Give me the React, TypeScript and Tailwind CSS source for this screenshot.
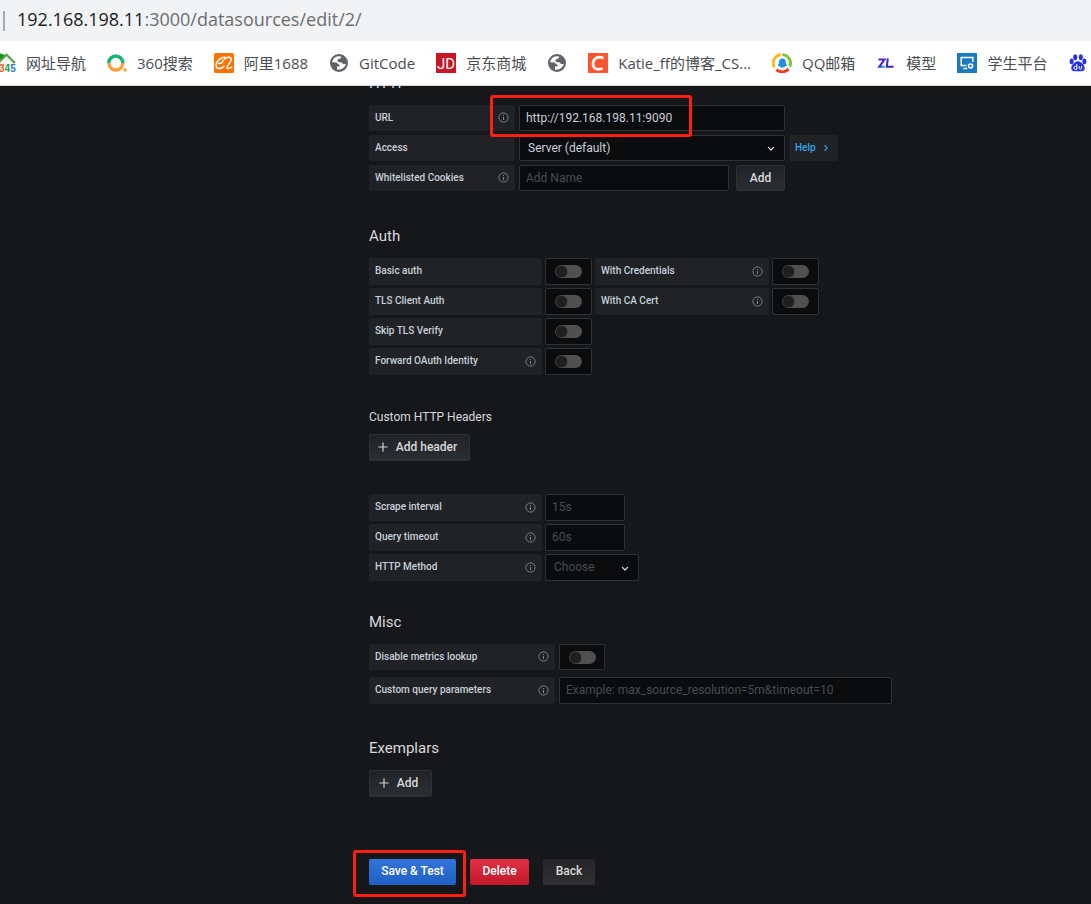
import React from 'react';

interface FieldLabelProps {
  text: string;
  htmlFor: string;
  width: string;
  info?: boolean;
}

interface ToggleProps {
  id: string;
  width?: string;
}

interface Bookmark {
  title: string;
  icon: React.ReactNode;
}

const inputClass =
  'rounded-[2px] border border-[#2c3235] bg-[#0b0c0e] px-1.5 pb-px text-xs text-[#c7d0d9] outline-none placeholder:text-[#464c54]';

const selectClass =
  'w-full appearance-none rounded-[2px] border border-[#2c3235] bg-[#0b0c0e] px-2 pb-px text-xs outline-none';

const secondaryButton =
  'flex items-center justify-center rounded-[2px] border border-[#2c3235] bg-linear-to-b from-[#202226] to-[#2a2f33] pb-px text-xs font-medium text-[#d8d9da]';

const InfoIcon: React.FC = () => (
  <svg className="h-[11px] w-[11px] shrink-0" viewBox="0 0 11 11" fill="none" stroke="#84878b">
    <circle cx="5.5" cy="5.5" r="4.6" strokeWidth="0.9" />
    <path d="M5.5 5v3M5.5 3v1" strokeWidth="1" />
  </svg>
);

const PlusIcon: React.FC = () => (
  <svg className="h-[10px] w-[10px]" viewBox="0 0 10 10" stroke="#d0d2d4" strokeWidth="1.2" strokeLinecap="round">
    <path d="M5 0.8v8.4M0.8 5h8.4" />
  </svg>
);

const ChevronDown: React.FC = () => (
  <div className="pointer-events-none absolute inset-y-0 right-2.5 flex items-center">
    <svg
      className="h-2 w-2"
      viewBox="0 0 8 8"
      fill="none"
      stroke="#d8d9da"
      strokeWidth="1.3"
      strokeLinecap="round"
      strokeLinejoin="round"
    >
      <path d="M1.4 3.4L4 6L6.6 3.4" />
    </svg>
  </div>
);

const FieldLabel: React.FC<FieldLabelProps> = ({ text, htmlFor, width, info }) => (
  <label
    htmlFor={htmlFor}
    className={`flex shrink-0 items-center justify-between rounded-[2px] bg-[#202226] px-1.5 pb-px text-[10px] font-medium text-[#c7d0d9] ${width}`}
  >
    {text}
    {info && <InfoIcon />}
  </label>
);

const Toggle: React.FC<ToggleProps> = ({ id, width = 'w-[47px]' }) => (
  <div className={`flex shrink-0 items-center justify-center rounded-[2px] border border-[#2c3235] bg-[#0b0c0e] ${width}`}>
    <input
      id={id}
      type="checkbox"
      className="flex h-[13px] w-[27px] appearance-none items-center rounded-full bg-[#505050] px-px before:h-[11px] before:w-[11px] before:rounded-full before:bg-[#1f1f20] before:shadow-[0_0_2px_#1f1f20] checked:justify-end checked:bg-[#3274d9]"
    />
  </div>
);

const SectionTitle: React.FC<{ children: React.ReactNode; spacing: string }> = ({ children, spacing }) => (
  <h3 className={`mb-3 text-[15px] leading-5 text-[#d8d9da] ${spacing}`}>{children}</h3>
);

const GlobeIcon: React.FC = () => (
  <svg className="h-5 w-5" viewBox="0 0 20 20">
    <circle cx="10" cy="10" r="9" fill="#5f6368" />
    <path d="M9.6 3.2C6.4 3.2 3.6 5.8 3.2 9.2L7.4 9.4C8.6 9.6 8.6 10.8 9.4 11.2C10.6 11.6 11 12.4 10.6 13.2L8 13.6V16.6C12 17.4 16 14.8 16.8 10.8L14.4 11.2L12.6 9.4L9.4 9L8.2 7.4L9.4 6L11.6 5.6L12.2 3.6Z" fill="#fff" />
    <path d="M3.2 9.4L8.2 12.8L7.4 14.2L5.2 14.6C4 13.2 3.2 11.6 3.2 9.4Z" fill="#5f6368" />
  </svg>
);

const bookmarks: Bookmark[] = [
  {
    title: '网址导航',
    icon: (
      <svg className="h-5 w-5" viewBox="0 0 20 20">
        <path d="M4 9L10 3L17 10V12H4Z" fill="#f3f6f1" stroke="#c3ccc0" strokeWidth="0.7" />
        <path d="M3 9L10.5 1.6L19 10" fill="none" stroke="#5a9a48" strokeWidth="2" />
        <path d="M3 0L9 2L5 6L2 7Z" fill="#159b1c" />
        <g fontFamily="Liberation Sans, sans-serif" fontSize="10" fontWeight="bold">
          <text x="3" y="19" fill="#ef5a26">3</text>
          <text x="8.6" y="19" fill="#309b36">4</text>
          <text x="14.2" y="19" fill="#2c77d8">5</text>
        </g>
      </svg>
    ),
  },
  {
    title: '360搜索',
    icon: (
      <svg className="h-5 w-5" viewBox="0 0 20 20" fill="none" strokeWidth="3.4">
        <path d="M1.8 10A7 7 0 0 1 15.8 10" stroke="#16b574" />
        <path d="M1.8 10A7 7 0 0 0 15.8 10" stroke="#fba13b" />
        <circle cx="18" cy="17" r="1.8" fill="#fba13b" stroke="none" />
      </svg>
    ),
  },
  {
    title: '阿里1688',
    icon: (
      <svg className="h-5 w-5" viewBox="0 0 20 20" fill="none" stroke="#fff" strokeWidth="1.5" strokeLinecap="round">
        <rect width="20" height="20" rx="1.5" fill="#ff7300" stroke="none" />
        <path d="M11 4.2C6.5 3.8 2.4 8.4 2 12C2 16.4 6.5 16.4 10 13.4M4.5 10.4C7.4 10.6 8.8 9 9 7.2" />
        <path d="M10.4 6C13 3.4 17.4 3.6 17.2 6.4C16.8 9.6 13.8 12 13 14C12.6 16 15 15.8 17.8 14.2" />
      </svg>
    ),
  },
  { title: 'GitCode', icon: <GlobeIcon /> },
  {
    title: '京东商城',
    icon: (
      <svg className="h-5 w-5" viewBox="0 0 20 20">
        <rect width="20" height="20" fill="#c81623" />
        <text x="10" y="15.5" textAnchor="middle" fill="#fff" fontFamily="Roboto, sans-serif" fontSize="15">JD</text>
      </svg>
    ),
  },
  { title: '', icon: <GlobeIcon /> },
  {
    title: 'Katie_ff的博客_CS...',
    icon: (
      <svg className="h-5 w-5" viewBox="0 0 20 20">
        <rect width="20" height="20" fill="#fc5531" />
        <path d="M15.5 5.2C10.5 2.8 5.6 4.8 5 10.2C4.5 15.5 9 17.4 14.6 15.4" fill="none" stroke="#fff" strokeWidth="2.6" />
      </svg>
    ),
  },
  {
    title: 'QQ邮箱',
    icon: (
      <svg className="h-5 w-5" viewBox="0 0 20 20" fill="none" strokeWidth="2.8">
        <path d="M2.4 14.4A8.6 8.6 0 0 1 9 1.6" stroke="#fdb913" />
        <path d="M10.4 1.6A8.6 8.6 0 0 1 17.8 13.6" stroke="#75c82b" />
        <path d="M4.4 16.6A8.6 8.6 0 0 0 16.6 16" stroke="#f03a17" />
        <path d="M10.4 5.6C12.8 5.6 14 7.5 13.9 10L15 13.2L13 13L12.4 14.4H8.4L7.8 13L5.8 13.2L6.9 10C6.8 7.5 8 5.6 10.4 5.6Z" fill="#1b8fd8" />
      </svg>
    ),
  },
  {
    title: '模型',
    icon: (
      <svg className="h-5 w-5" viewBox="0 0 20 20" fill="none" strokeWidth="2">
        <path d="M2.4 6.4H8.6L3.2 13.8H8.4" stroke="#5a1fd0" />
        <path d="M11.8 5.4L10.8 13.8H17.6" stroke="#3d28d8" />
        <path d="M5.6 13.8H9" stroke="#2ccbd8" />
      </svg>
    ),
  },
  {
    title: '学生平台',
    icon: (
      <svg className="h-5 w-5" viewBox="0 0 20 20" fill="none" stroke="#fff" strokeWidth="1.5">
        <rect width="20" height="20" rx="0.5" fill="#1a7abf" stroke="none" />
        <path d="M9.5 12.6H4.2V4.4H15.8V9M6.4 15.4H10.2" />
        <circle cx="13.6" cy="13" r="2" />
      </svg>
    ),
  },
  {
    title: '',
    icon: (
      <svg className="h-5 w-5" viewBox="0 0 20 20" fill="#2932e1">
        <ellipse cx="7.2" cy="4.2" rx="2" ry="3" />
        <ellipse cx="12.8" cy="4.2" rx="2" ry="3" />
        <ellipse cx="3.6" cy="8.4" rx="2" ry="2.8" />
        <ellipse cx="16.4" cy="8.4" rx="2" ry="2.8" />
        <path d="M10 8.2C13 8.2 17 12.5 16.8 15.2C16.5 18.8 13.5 18.4 10 18.2C6.5 18.4 3.5 18.8 3.2 15.2C3 12.5 7 8.2 10 8.2Z" />
        <path d="M8.8 11V16.4H7.4A1.4 1.4 0 0 1 7.4 13.4H8.8M11.2 13V15.4C11.2 16.2 13.6 16.6 13.6 15.4V13" fill="none" stroke="#fff" strokeWidth="1" />
      </svg>
    ),
  },
];

const BrowserChrome: React.FC = () => (
  <header className="font-['Open_Sans','Noto_Sans_CJK_SC',sans-serif]">
    <div className="flex h-[41px] items-center gap-3 bg-[#f1f3f4] pl-[3px]">
      <div className="h-5 w-0.5 bg-[#a9abae]"></div>
      <div className="pb-1 text-lg text-[#6b6e72]">
        <span className="text-[#202124]">192.168.198.11</span>:3000/datasources/edit/2/
      </div>
    </div>
    <nav className="h-[45px] overflow-hidden border-b border-[#d3d5d8] bg-white">
      <div className="-ml-1 flex h-11 items-center gap-[21px]">
        {bookmarks.map((b, i) => (
          <a key={i} href="#" aria-label={b.title || 'Bookmark'} className="flex shrink-0 items-center gap-2.5 text-[15px] text-[#4a4d51]">
            {b.icon}
            {b.title && <span className="whitespace-nowrap">{b.title}</span>}
          </a>
        ))}
      </div>
    </nav>
  </header>
);

const App: React.FC = () => {
  return (
    <div className="flex min-h-screen flex-col bg-[#16171b]">
      <BrowserChrome />

      <main className="flex-1 overflow-hidden pb-[19px] pl-[369px] font-['Roboto',sans-serif] text-xs text-[#d8d9da]">
        <form className="max-w-[523px]" onSubmit={(e) => e.preventDefault()}>
          {/* scrolled partly under the bookmarks bar */}
          <SectionTitle spacing="-mt-[13px]">HTTP</SectionTitle>
          <div className="space-y-1">
            <div className="relative z-10 flex h-[26px] gap-1">
              <FieldLabel text="URL" htmlFor="url" width="w-[146px]" info />
              <input id="url" defaultValue="http://192.168.198.11:9090" className={`w-[266px] ${inputClass}`} />
              <div className="pointer-events-none absolute -top-2.5 left-[121px] h-[42px] w-[202px] rounded-[3px] border-3 border-[#ff1f10]"></div>
            </div>
            <div className="flex h-[26px] gap-1">
              <FieldLabel text="Access" htmlFor="access" width="w-[146px]" />
              <div className="relative flex w-[266px]">
                <select id="access" className={`text-[#c7d0d9] ${selectClass}`}>
                  <option>Server (default)</option>
                  <option>Browser</option>
                </select>
                <ChevronDown />
              </div>
              <button type="button" className="flex w-[49px] items-center gap-2 rounded-[2px] bg-[#202226] pb-px pl-1.5 text-[10px] font-medium text-[#33a2e5]">
                Help
                <svg className="h-2 w-1" viewBox="0 0 4 8" fill="none" stroke="#33a2e5" strokeWidth="1.2">
                  <path d="M0.6 1.2L3.2 4L0.6 6.8" />
                </svg>
              </button>
            </div>
            <div className="flex h-[26px] gap-1">
              <FieldLabel text="Whitelisted Cookies" htmlFor="cookies" width="w-[146px]" info />
              <div className="flex gap-[7px]">
                <input id="cookies" placeholder="Add Name" className={`w-[210px] ${inputClass}`} />
                <button type="button" className={`w-[49px] ${secondaryButton}`}>Add</button>
              </div>
            </div>
          </div>

          <SectionTitle spacing="mt-[35px]">Auth</SectionTitle>
          <div className="space-y-[3px]">
            <div className="flex h-[27px] gap-[3px]">
              <FieldLabel text="Basic auth" htmlFor="basic" width="w-[173px]" />
              <Toggle id="basic" />
              <FieldLabel text="With Credentials" htmlFor="credentials" width="w-[174px]" info />
              <Toggle id="credentials" />
            </div>
            <div className="flex h-[27px] gap-[3px]">
              <FieldLabel text="TLS Client Auth" htmlFor="tls" width="w-[173px]" />
              <Toggle id="tls" />
              <FieldLabel text="With CA Cert" htmlFor="cacert" width="w-[174px]" info />
              <Toggle id="cacert" />
            </div>
            <div className="flex h-[27px] gap-[3px]">
              <FieldLabel text="Skip TLS Verify" htmlFor="skip" width="w-[173px]" />
              <Toggle id="skip" />
            </div>
            <div className="flex h-[27px] gap-[3px]">
              <FieldLabel text="Forward OAuth Identity" htmlFor="oauth" width="w-[173px]" info />
              <Toggle id="oauth" />
            </div>
          </div>

          <h6 className="mt-8 mb-[7px] text-xs leading-5">Custom HTTP Headers</h6>
          <button type="button" className={`h-[27px] w-[101px] gap-2 pr-1 ${secondaryButton}`}>
            <PlusIcon />
            Add header
          </button>

          <div className="mt-[33px] space-y-[3px]">
            <div className="flex h-[27px] gap-[3px]">
              <FieldLabel text="Scrape interval" htmlFor="scrape" width="w-[173px]" info />
              <input id="scrape" placeholder="15s" className={`w-20 ${inputClass}`} />
            </div>
            <div className="flex h-[27px] gap-[3px]">
              <FieldLabel text="Query timeout" htmlFor="timeout" width="w-[173px]" info />
              <input id="timeout" placeholder="60s" className={`w-20 ${inputClass}`} />
            </div>
            <div className="flex h-[27px] gap-[3px]">
              <FieldLabel text="HTTP Method" htmlFor="method" width="w-[173px]" info />
              <div className="relative flex w-[94px]">
                <select id="method" defaultValue="" className={`text-[#464c54] ${selectClass}`}>
                  <option value="">Choose</option>
                  <option>GET</option>
                  <option>POST</option>
                </select>
                <ChevronDown />
              </div>
            </div>
          </div>

          <SectionTitle spacing="mt-[31px]">Misc</SectionTitle>
          <div className="space-y-[7px]">
            <div className="flex h-[26px] gap-1">
              <FieldLabel text="Disable metrics lookup" htmlFor="lookup" width="w-[186px]" info />
              <Toggle id="lookup" width="w-[46px]" />
            </div>
            <div className="flex h-[27px] gap-1">
              <FieldLabel text="Custom query parameters" htmlFor="params" width="w-[186px]" info />
              <input id="params" placeholder="Example: max_source_resolution=5m&timeout=10" className={`min-w-0 flex-1 ${inputClass}`} />
            </div>
          </div>

          <SectionTitle spacing="mt-[34px]">Exemplars</SectionTitle>
          <button type="button" className={`h-[27px] w-[63px] gap-2 pr-1 ${secondaryButton}`}>
            <PlusIcon />
            Add
          </button>

          <div className="mt-[62px] flex h-[26px] gap-3.5 font-medium">
            <div className="relative flex">
              <button type="submit" className="w-[87px] rounded-[2px] bg-linear-to-b from-[#3274d9] to-[#1f60c4] pb-0.5 text-white">
                Save &amp; Test
              </button>
              <div className="pointer-events-none absolute -top-[9px] -left-4 h-[47px] w-[113px] rounded-[3px] border-3 border-[#ff1f10]"></div>
            </div>
            <button type="button" className="w-[59px] rounded-[2px] bg-linear-to-b from-[#e02f44] to-[#c4162a] pb-0.5 text-white">
              Delete
            </button>
            <button type="button" className="w-[52px] rounded-[2px] bg-linear-to-b from-[#262628] to-[#303032] pb-0.5">
              Back
            </button>
          </div>
        </form>
      </main>
    </div>
  );
};

export default App;
